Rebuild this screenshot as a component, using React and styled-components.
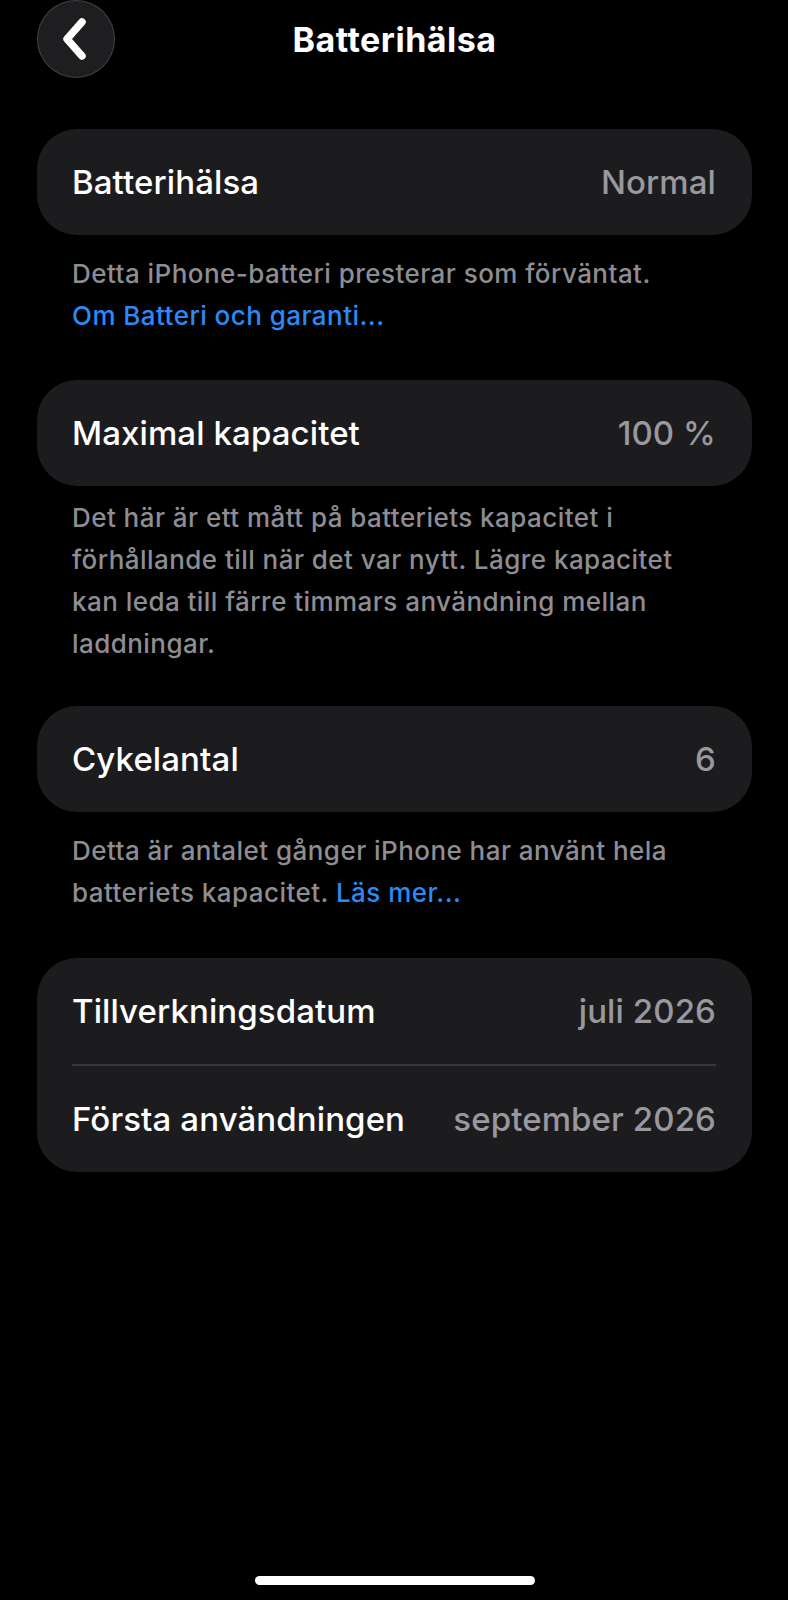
import styled, { createGlobalStyle } from "styled-components";

const GlobalStyle = createGlobalStyle`
  html, body {
    margin: 0;
    padding: 0;
    background: #000;
  }
  body {
    font-family: Inter, "Noto Sans", sans-serif;
    -webkit-font-smoothing: antialiased;
  }
`;

const Page = styled.div`
  min-height: 1600px;
  display: flex;
  flex-direction: column;
  background: #000;
  color: #fff;
  box-sizing: border-box;
  padding: 0 36px 0 37px;
`;

const Header = styled.header`
  display: grid;
  grid-template-columns: 1fr auto 1fr;
  align-items: center;
  height: 78px;
`;

const BackButton = styled.button`
  justify-self: start;
  width: 78px;
  height: 78px;
  border-radius: 50%;
  background: #1e1e20;
  border: 1px solid rgba(255, 255, 255, 0.16);
  display: flex;
  align-items: center;
  justify-content: center;
  padding: 0;
  cursor: pointer;
`;

const Title = styled.h1`
  margin: 0;
  font-size: 34px;
  font-weight: 700;
  letter-spacing: 0.5px;
`;

const Card = styled.div`
  background: #1c1c1e;
  border-radius: 40px;
  padding: 0 36px 0 35px;
  margin-top: ${(p) => p.$top}px;
`;

const Row = styled.div`
  height: 106px;
  display: flex;
  align-items: center;
  justify-content: space-between;
  font-size: 33px;
  font-weight: 500;
  letter-spacing: 0.1px;
`;

const Divider = styled.div`
  height: 2px;
  background: #38383b;
`;

const Value = styled.span`
  color: #98989e;
`;

const Footnote = styled.p`
  margin: ${(p) => p.$top}px 0 0;
  padding: 0 35px;
  font-size: 26px;
  line-height: 42px;
  font-weight: 500;
  color: #8d8d93;
  letter-spacing: 0.45px;
`;

const Link = styled.a`
  color: #2a8af6;
  text-decoration: none;
`;

const HomeIndicator = styled.div`
  margin: auto auto 15px;
  width: 280px;
  height: 9px;
  border-radius: 5px;
  background: #fff;
`;

function Chevron() {
  return (
    <svg width="30" height="44" viewBox="0 0 30 44">
      <path
        d="M21 5 L6 22 L21 39"
        fill="none"
        stroke="#fff"
        strokeWidth="7.5"
        strokeLinecap="round"
        strokeLinejoin="round"
      />
    </svg>
  );
}

function InfoRow({ label, value }) {
  return (
    <Row>
      <span>{label}</span>
      <Value>{value}</Value>
    </Row>
  );
}

export default function App() {
  return (
    <>
      <GlobalStyle />
      <Page>
        <Header>
          <BackButton aria-label="Tillbaka">
            <Chevron />
          </BackButton>
          <Title>Batterihälsa</Title>
          <span />
        </Header>

        <Card $top={51}>
          <InfoRow label="Batterihälsa" value="Normal" />
        </Card>
        <Footnote $top={18}>
          Detta iPhone-batteri presterar som förväntat.
          <br />
          <Link>Om Batteri och garanti...</Link>
        </Footnote>

        <Card $top={43}>
          <InfoRow label="Maximal kapacitet" value="100 %" />
        </Card>
        <Footnote $top={11}>
          Det här är ett mått på batteriets kapacitet i förhållande till när
          det var nytt. Lägre kapacitet kan leda till färre timmars användning
          mellan laddningar.
        </Footnote>

        <Card $top={41}>
          <InfoRow label="Cykelantal" value="6" />
        </Card>
        <Footnote $top={18}>
          Detta är antalet gånger iPhone har använt hela batteriets kapacitet.{" "}
          <Link>Läs mer...</Link>
        </Footnote>

        <Card $top={44}>
          <InfoRow label="Tillverkningsdatum" value="juli 2026" />
          <Divider />
          <InfoRow label="Första användningen" value="september 2026" />
        </Card>

        <HomeIndicator />
      </Page>
    </>
  );
}
